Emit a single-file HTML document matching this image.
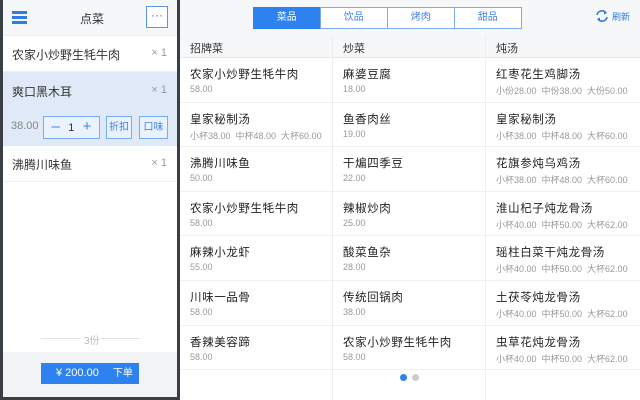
<!DOCTYPE html><html><head><meta charset="utf-8"><style>
*{margin:0;padding:0;box-sizing:border-box}
body{width:640px;height:400px;overflow:hidden;background:#3a3f46;font-family:"Liberation Sans","Noto Sans CJK SC",sans-serif;position:relative}
.l{position:absolute;left:3px;top:0;width:174px;height:397px;background:#fff}
.r{position:absolute;left:180px;top:0;width:460px;height:400px;background:#fff}
.abs{position:absolute}
.it{position:absolute;left:0;width:174px;font-size:12px;color:#333}
.it .n{position:absolute;left:9px}
.it .x{position:absolute;right:10px;color:#999;font-size:11px}
.bx{position:absolute;border:1px solid #7aaaf0;color:#3f82e8;font-size:10px;text-align:center;background:#eaf2fd}
.col{position:absolute;top:36px;width:153px;height:364px;border-right:1px solid #eceef0}
.hd{height:22px;background:#f6f7f8;border-bottom:1px solid #e6e8ea;font-size:11px;color:#333;padding:4px 0 0 10px}
.c{height:44.6px;border-bottom:1px solid #eef0f2;padding:8px 0 0 10px;white-space:nowrap;overflow:hidden}
.c b{display:block;font-weight:normal;font-size:11.5px;color:#222;letter-spacing:.6px;height:18px}
.c i{display:block;font-style:normal;font-size:9px;color:#999;letter-spacing:0}
.tab{position:absolute;top:7px;height:22px;width:67.5px;border:1px solid #7eaaf0;color:#3f82e8;font-size:10px;text-align:center;line-height:20px;background:#fff}
</style></head><body>
<div class="l">
<div class="abs" style="left:0;top:0;width:174px;height:36px;background:#f6f7f9;border-bottom:1px solid #eceef0"></div>
<div class="abs" style="left:9px;top:11px;width:15px;height:3px;background:#2d7be5;box-shadow:0 5px 0 #2d7be5,0 10px 0 #2d7be5"></div>
<div class="abs" style="left:77px;top:10px;font-size:12px;color:#333">点菜</div>
<div class="abs" style="left:143px;top:6px;width:22px;height:22px;border:1px solid #5b95ea;color:#2d7be5;font-size:12px;text-align:center;line-height:16px;background:#fff">···</div>
<div class="it" style="top:36px;height:36px;border-bottom:1px solid #eee"><span class="n" style="top:10px">农家小炒野生牦牛肉</span><span class="x" style="top:11px">× 1</span></div>
<div class="it" style="top:72px;height:74px;background:#dfe9f8"><span class="n" style="top:11px">爽口黑木耳</span><span class="x" style="top:12px">× 1</span>
<span class="abs" style="left:8px;top:48px;color:#888;font-size:11px">38.00</span>
<div class="bx" style="left:40px;top:44px;width:57px;height:23px;font-size:15px;line-height:20px;color:#3f82e8">–&nbsp;&nbsp;<span style="font-size:11px;color:#333">1</span>&nbsp;&nbsp;+</div>
<div class="bx" style="left:103px;top:44px;width:26px;height:23px;line-height:21px">折扣</div>
<div class="bx" style="left:136px;top:44px;width:29px;height:23px;line-height:21px">口味</div></div>
<div class="it" style="top:146px;height:36px;border-bottom:1px solid #eee"><span class="n" style="top:10px">沸腾川味鱼</span><span class="x" style="top:11px">× 1</span></div>
<div class="abs" style="left:38px;top:338px;width:40px;height:1px;background:#e3e3e3"></div>
<div class="abs" style="left:81px;top:332px;font-size:10px;color:#bbb">3份</div>
<div class="abs" style="left:97px;top:338px;width:40px;height:1px;background:#e3e3e3"></div>
<div class="abs" style="left:0;top:352px;width:174px;height:45px;background:#f2f3f5"></div>
<div class="abs" style="left:38px;top:363px;width:98px;height:21px;background:#2e82f0;color:#fff;font-size:11px;line-height:21px"><span style="margin-left:15px">¥ 200.00</span><span style="margin-left:14px;font-size:10px">下单</span></div>
</div>
<div class="r">
<div class="abs" style="left:0;top:0;width:460px;height:36px;background:#f6f7f9"></div>
<div class="tab" style="left:73px;background:#2e82f0;color:#fff;border-color:#2e82f0">菜品</div>
<div class="tab" style="left:140px">饮品</div>
<div class="tab" style="left:207px">烤肉</div>
<div class="tab" style="left:274px">甜品</div>
<svg class="abs" style="left:415px;top:9px" width="14" height="14" viewBox="0 0 14 14"><path d="M2 6A5 5 0 0 1 11 4M12 8A5 5 0 0 1 3 10" fill="none" stroke="#2d7be5" stroke-width="1.6"/><path d="M9 2l3 2-3 1.5z M5 12l-3-2 3-1.5z" fill="#2d7be5"/></svg>
<div class="abs" style="left:432px;top:10px;font-size:9px;color:#2d7be5">刷新</div>
<div class="col" style="left:0"><div class="hd">招牌菜</div>
<div class="c"><b>农家小炒野生牦牛肉</b><i>58.00</i></div>
<div class="c"><b>皇家秘制汤</b><i>小杯38.00&nbsp; 中杯48.00&nbsp; 大杯60.00</i></div>
<div class="c"><b>沸腾川味鱼</b><i>50.00</i></div>
<div class="c"><b>农家小炒野生牦牛肉</b><i>58.00</i></div>
<div class="c"><b>麻辣小龙虾</b><i>55.00</i></div>
<div class="c"><b>川味一品骨</b><i>58.00</i></div>
<div class="c"><b>香辣美容蹄</b><i>58.00</i></div></div>
<div class="col" style="left:153px"><div class="hd">炒菜</div>
<div class="c"><b>麻婆豆腐</b><i>18.00</i></div>
<div class="c"><b>鱼香肉丝</b><i>19.00</i></div>
<div class="c"><b>干煸四季豆</b><i>22.00</i></div>
<div class="c"><b>辣椒炒肉</b><i>25.00</i></div>
<div class="c"><b>酸菜鱼杂</b><i>28.00</i></div>
<div class="c"><b>传统回锅肉</b><i>38.00</i></div>
<div class="c"><b>农家小炒野生牦牛肉</b><i>58.00</i></div></div>
<div class="col" style="left:306px;width:154px;border:none"><div class="hd">炖汤</div>
<div class="c"><b>红枣花生鸡脚汤</b><i>小份28.00&nbsp; 中份38.00&nbsp; 大份50.00</i></div>
<div class="c"><b>皇家秘制汤</b><i>小杯38.00&nbsp; 中杯48.00&nbsp; 大杯60.00</i></div>
<div class="c"><b>花旗参炖乌鸡汤</b><i>小杯38.00&nbsp; 中杯48.00&nbsp; 大杯60.00</i></div>
<div class="c"><b>淮山杞子炖龙骨汤</b><i>小杯40.00&nbsp; 中杯50.00&nbsp; 大杯62.00</i></div>
<div class="c"><b>瑶柱白菜干炖龙骨汤</b><i>小杯40.00&nbsp; 中杯50.00&nbsp; 大杯62.00</i></div>
<div class="c"><b>土茯苓炖龙骨汤</b><i>小杯40.00&nbsp; 中杯50.00&nbsp; 大杯62.00</i></div>
<div class="c"><b>虫草花炖龙骨汤</b><i>小杯40.00&nbsp; 中杯50.00&nbsp; 大杯62.00</i></div></div>
<div class="abs" style="left:220px;top:374px;width:7px;height:7px;border-radius:50%;background:#2e82f0"></div>
<div class="abs" style="left:232px;top:374px;width:7px;height:7px;border-radius:50%;background:#ccc"></div>
</div>
</body></html>
